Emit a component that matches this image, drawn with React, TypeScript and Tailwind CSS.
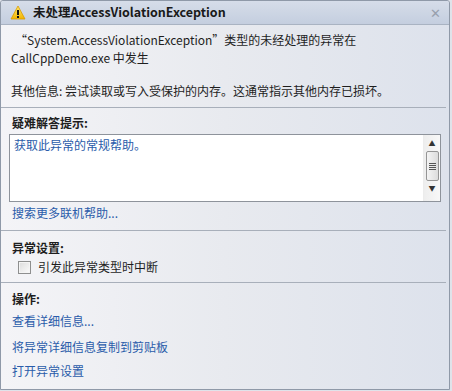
export default function App() {
  const font = { fontFamily: '"Noto Sans CJK SC", "Microsoft YaHei", sans-serif' };
  return (
    <div className="w-[452px] h-[391px] bg-[#dfe3ea] text-[12px] text-[#1e1e1e]" style={font}>
      <div className="w-[450px] h-[390px] flex flex-col border border-[#8f99a8] rounded-t-[3px] overflow-hidden bg-gradient-to-r from-[#f4f4f7] via-[#e8eaef] to-[#dde2ec]">
        {/* title bar */}
        <div className="h-[24px] shrink-0 flex items-center bg-gradient-to-b from-[#d6dde9] to-[#c4cedf] border-b border-[#a9b3c2] pl-[9px] pr-[8px]">
          <svg width="16" height="15" viewBox="0 0 16 15" className="shrink-0">
            <defs>
              <linearGradient id="warn" x1="0" y1="0" x2="0" y2="1">
                <stop offset="0" stopColor="#ffe86a" />
                <stop offset="1" stopColor="#f2b400" />
              </linearGradient>
            </defs>
            <path d="M8 1 L15 14 L1 14 Z" fill="url(#warn)" stroke="#d89a00" strokeWidth="0.8" strokeLinejoin="round" />
            <rect x="7" y="5" width="2" height="5" fill="#111" />
            <rect x="7" y="11" width="2" height="2" fill="#111" />
          </svg>
          <span className="ml-[7px] font-bold text-[12.5px] text-[#1a1a1a]">未处理AccessViolationException</span>
          <span className="ml-auto text-[#98a0ad] text-[13px] leading-none">✕</span>
        </div>

        {/* message */}
        <div className="px-[10px] pt-[6px] leading-[18px]">
          <p className="pl-[4px]">“System.AccessViolationException”类型的未经处理的异常在</p>
          <p>CallCppDemo.exe 中发生</p>
          <p className="mt-[15px]">其他信息: 尝试读取或写入受保护的内存。这通常指示其他内存已损坏。</p>
        </div>

        <div className="mt-[7px] mr-[3px] border-t border-[#a8afba]" />

        {/* troubleshooting */}
        <div className="px-[11px] pt-[6px]">
          <p className="font-bold leading-[18px]">疑难解答提示:</p>
        </div>
        <div className="mx-[8px] mt-[2px] h-[68px] flex border border-[#8e939b] bg-white">
          <div className="flex-1 px-[4px] pt-[1px] text-[#2a5caa]">获取此异常的常规帮助。</div>
          <div className="w-[17px] flex flex-col items-center bg-gradient-to-r from-[#eeeeee] to-[#f8f8f8] border-l border-[#ececec]">
            <div className="h-[14px] flex items-end pb-[2px] text-[#333] text-[7px] leading-none">▲</div>
            <div className="mt-[2px] w-[13px] h-[30px] rounded-[2px] border border-[#959595] bg-gradient-to-r from-[#f4f4f4] to-[#dcdcdc] flex flex-col items-center justify-center gap-[1px]">
              <div className="w-[7px] h-[1px] bg-[#555]" />
              <div className="w-[7px] h-[1px] bg-[#555]" />
              <div className="w-[7px] h-[1px] bg-[#555]" />
              <div className="w-[7px] h-[1px] bg-[#555]" />
            </div>
            <div className="mt-[4px] text-[#333] text-[7px] leading-none">▼</div>
          </div>
        </div>
        <div className="px-[11px] pt-[2px] text-[#2a5caa] leading-[18px]">搜索更多联机帮助...</div>

        <div className="mt-[8px] mr-[3px] border-t border-[#a8afba]" />

        {/* exception settings */}
        <div className="px-[11px] pt-[8px]">
          <p className="font-bold leading-[18px]">异常设置:</p>
          <label className="mt-[1px] ml-[6px] flex items-center gap-[7px]">
            <span className="w-[13px] h-[13px] border border-[#8e8f8f] bg-gradient-to-br from-[#dcdcdc] to-[#fbfbfb] shadow-[inset_0_0_0_1px_#f4f4f4]" />
            <span className="leading-[18px]">引发此异常类型时中断</span>
          </label>
        </div>

        <div className="mt-[6px] mr-[3px] border-t border-[#a8afba]" />

        {/* actions */}
        <div className="px-[11px] pt-[7px] flex flex-col">
          <p className="font-bold leading-[18px]">操作:</p>
          <a className="mt-[4px] leading-[18px] text-[#2a5caa]">查看详细信息...</a>
          <a className="mt-[8px] leading-[18px] text-[#2a5caa]">将异常详细信息复制到剪贴板</a>
          <a className="mt-[6px] leading-[18px] text-[#2a5caa]">打开异常设置</a>
        </div>
      </div>
    </div>
  );
}
